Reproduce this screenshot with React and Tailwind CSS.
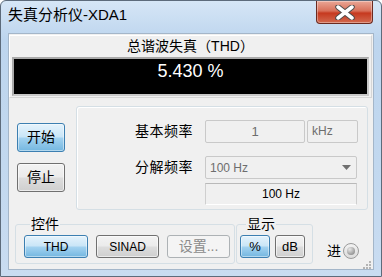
import React from "react";

const FONT = { fontFamily: "'Liberation Sans', 'Noto Sans CJK SC', sans-serif" };

const blueBtn =
  "border border-[#3c7fb1] rounded-[3px] bg-[linear-gradient(180deg,#e5f3fc_0%,#c9e5f7_48%,#a3d2f0_52%,#74b7e0_100%)] shadow-[inset_0_0_0_1px_rgba(255,255,255,0.45)]";
const grayBtn =
  "border border-[#707070] rounded-[3px] bg-[linear-gradient(180deg,#f3f3f3_0%,#ebebeb_48%,#dddddd_52%,#cfcfcf_100%)] shadow-[inset_0_0_0_1px_rgba(255,255,255,0.6)]";
const offBtn = "border border-[#adb2b5] rounded-[3px] bg-[#f4f4f4] text-[#8b8b8b]";

const CloseX = () => (
  <svg width="20" height="15" viewBox="0 0 20 15">
    <path d="M3 2 L17 13 M17 2 L3 13" stroke="#4b4b4b" strokeWidth="5.5" strokeLinecap="round" />
    <path d="M3 2 L17 13 M17 2 L3 13" stroke="#ffffff" strokeWidth="3.5" strokeLinecap="round" />
  </svg>
);

const Grip = () => (
  <svg width="9" height="9" viewBox="0 0 9 9">
    {[
      [7, 1],
      [4, 4],
      [7, 4],
      [1, 7],
      [4, 7],
      [7, 7],
    ].map(([x, y]) => (
      <rect key={`${x}-${y}`} x={x} y={y} width="2" height="2" fill="#b4b4b4" />
    ))}
  </svg>
);

export default function App() {
  return (
    <div
      className="w-[382px] h-[277px] flex flex-col rounded-t-[6px] border border-[#5d6b7b] bg-[linear-gradient(180deg,#d6e6f6_0%,#bdd5ee_14%,#c2d8ef_60%,#c9dcf1_100%)] text-black"
      style={FONT}
    >
      {/* title bar */}
      <div className="h-[32px] flex items-start">
        <div className="pl-[7px] pt-[5px] text-[15px] leading-[18px] text-black">失真分析仪-XDA1</div>
        <div className="ml-auto mr-[8px] w-[57px] h-[23px] flex items-center justify-center rounded-b-[4px] border border-t-0 border-[#6b2a20] bg-[linear-gradient(180deg,#e9a796_0%,#d8705a_45%,#c6391f_55%,#d26a50_100%)] shadow-[inset_0_0_0_1px_rgba(255,255,255,0.35)]">
          <CloseX />
        </div>
      </div>

      {/* client area */}
      <div className="mx-[7px] h-[237px] bg-[#f0f0f0] border border-[#a4b6c9] flex flex-col">
        {/* THD display panel */}
        <div className="mt-[1px] mr-[1px] border border-[#d6d6d6] border-t-white border-l-white pb-[1px]">
          <div className="h-[21px] text-center text-[14px] leading-[21px]">总谐波失真（THD）</div>
          <div className="mx-[2px] h-[39px] border-2 border-[#c8c8c8] border-t-[#a9a9a9] border-l-[#a9a9a9] bg-black">
            <div className="pt-[2px] text-center text-white text-[18px] leading-[20px]">5.430 %</div>
          </div>
        </div>

        {/* controls row */}
        <div className="mt-[8px] flex items-start">
          <div className="ml-[8px] w-[48px] pt-[17px] flex flex-col gap-[11px]">
            <div className={`${blueBtn} h-[29px] flex items-center justify-center text-[14px]`}>开始</div>
            <div className={`${grayBtn} h-[29px] flex items-center justify-center text-[14px]`}>停止</div>
          </div>

          <div className="ml-[11px] w-[292px] h-[104px] rounded-[3px] border border-[#d5dfe5] shadow-[inset_1px_1px_0_#ffffff] pt-[13px] pl-[58px]">
            <div className="flex items-center h-[23px]">
              <div className="w-[70px] text-[14px] tracking-[0.5px]">基本频率</div>
              <div className="w-[100px] h-[23px] border border-[#c9c9c9] rounded-[2px] bg-[#f0f0f0] flex items-center justify-center text-[13px] text-[#6d6d6d]">
                1
              </div>
              <div className="ml-[2px] w-[51px] h-[23px] border border-[#c9c9c9] rounded-[2px] bg-[#f0f0f0] pl-[4px] pt-[3px] text-[12px] leading-[14px] text-[#6d6d6d]">
                kHz
              </div>
            </div>
            <div className="mt-[13px] flex items-center h-[23px]">
              <div className="w-[70px] text-[14px] tracking-[0.5px]">分解频率</div>
              <div className="w-[152px] h-[23px] border border-[#c9c9c9] rounded-[2px] bg-[#f0f0f0] flex items-center pl-[4px] pr-[5px] text-[12px] text-[#6d6d6d]">
                <span>100 Hz</span>
                <svg className="ml-auto" width="9" height="5" viewBox="0 0 9 5">
                  <path d="M0 0 H9 L4.5 5 Z" fill="#707070" />
                </svg>
              </div>
            </div>
            <div className="mt-[4px] ml-[70px] w-[152px] h-[22px] border border-[#cfcfcf] border-t-[#b9b9b9] border-b-white bg-[#f0f0f0] flex items-center justify-center text-[12px]">
              100 Hz
            </div>
          </div>
        </div>

        {/* bottom groups */}
        <div className="mt-[7px] flex items-start">
          <fieldset className="ml-[6px] w-[218px] rounded-[3px] border border-[#d5dfe5] pl-[8px] pr-[4px] pb-[5px]">
            <legend className="ml-[6px] px-[1px] text-[14px] leading-[14px]">控件</legend>
            <div className="pt-[4px] flex gap-[8px] text-[12px]">
              <div className={`${blueBtn} w-[64px] h-[23px] flex items-center justify-center`}>THD</div>
              <div className={`${grayBtn} w-[63px] h-[23px] flex items-center justify-center`}>SINAD</div>
              <div className={`${offBtn} w-[63px] h-[23px] flex items-center justify-center text-[14px]`}>设置...</div>
            </div>
          </fieldset>

          <fieldset className="ml-[1px] w-[77px] rounded-[3px] border border-[#d5dfe5] pl-[3px] pb-[5px]">
            <legend className="ml-[6px] px-[1px] text-[14px] leading-[14px]">显示</legend>
            <div className="pt-[4px] flex gap-[5px] text-[13px]">
              <div className={`${blueBtn} w-[30px] h-[23px] flex items-center justify-center`}>%</div>
              <div className={`${grayBtn} w-[30px] h-[23px] flex items-center justify-center`}>dB</div>
            </div>
          </fieldset>

          <div className="ml-[14px] mt-[26px] flex items-center gap-[2px]">
            <span className="text-[14px] leading-[16px]">进</span>
            <div className="w-[16px] h-[16px] rounded-full border border-[#9a9a9a] bg-[linear-gradient(180deg,#f2f2f2,#dcdcdc)] flex items-center justify-center">
              <div className="w-[8px] h-[8px] rounded-full bg-[radial-gradient(circle_at_35%_30%,#e6e6e6,#9a9a9a_70%,#7f7f7f)]" />
            </div>
          </div>

          <div className="ml-auto mr-[2px] mt-[43px]">
            <Grip />
          </div>
        </div>
      </div>
    </div>
  );
}
